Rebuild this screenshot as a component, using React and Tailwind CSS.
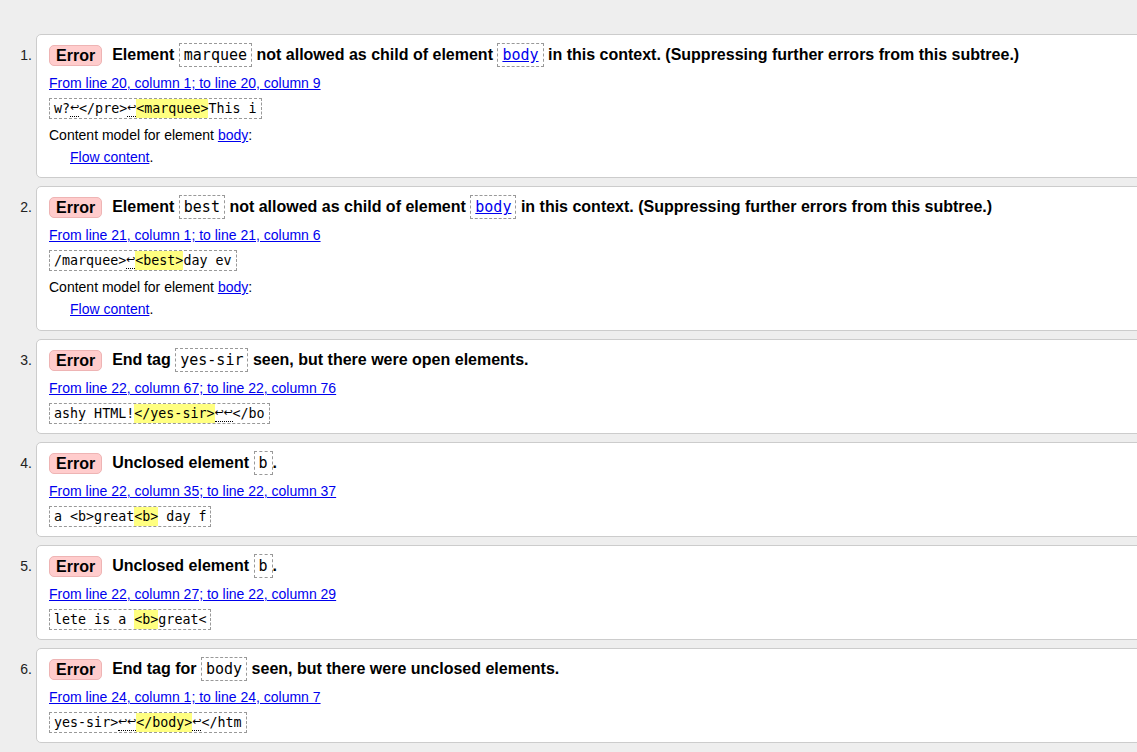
import React from "react";

const mono = { fontFamily: '"DejaVu Sans Mono", "Liberation Mono", monospace' };
const arrowFont = { fontFamily: '"DejaVu Sans", "Liberation Sans", sans-serif' };

function Code({ children, link }) {
  return (
    <span
      className="inline-block border border-dashed border-[#999] px-[4px] py-[2px] leading-[18px] text-[15px] font-normal align-middle"
      style={mono}
    >
      {link ? <a href="#" className="text-[#0000ee] underline">{children}</a> : children}
    </span>
  );
}

function Br({ n = 1 }) {
  return (
    <span className="inline-flex border-b border-dotted border-black h-[16px] items-center">
      {Array.from({ length: n }).map((_, k) => (
        <span key={k} className="inline-flex w-[9px] justify-center text-[11px] leading-[14px]" style={arrowFont}>
          ↩
        </span>
      ))}
    </span>
  );
}

function Hl({ children }) {
  return <span className="bg-[#ffff80]">{children}</span>;
}

const items = [
  {
    title: [
      "Element ",
      <Code key="a">marquee</Code>,
      " not allowed as child of element ",
      <Code key="b" link>body</Code>,
      " in this context. (Suppressing further errors from this subtree.)",
    ],
    link: "From line 20, column 1; to line 20, column 9",
    snippet: ["w?", <Br key="1" />, "</pre>", <Br key="2" />, <Hl key="3">{"<marquee>"}</Hl>, "This i"],
    model: true,
  },
  {
    title: [
      "Element ",
      <Code key="a">best</Code>,
      " not allowed as child of element ",
      <Code key="b" link>body</Code>,
      " in this context. (Suppressing further errors from this subtree.)",
    ],
    link: "From line 21, column 1; to line 21, column 6",
    snippet: ["/marquee>", <Br key="1" />, <Hl key="3">{"<best>"}</Hl>, "day ev"],
    model: true,
  },
  {
    title: ["End tag ", <Code key="a">yes-sir</Code>, " seen, but there were open elements."],
    link: "From line 22, column 67; to line 22, column 76",
    snippet: ["ashy HTML!", <Hl key="3">{"</yes-sir>"}</Hl>, <Br key="1" n={2} />, "</bo"],
  },
  {
    title: ["Unclosed element ", <Code key="a">b</Code>, "."],
    link: "From line 22, column 35; to line 22, column 37",
    snippet: ["a <b>great", <Hl key="3">{"<b>"}</Hl>, " day f"],
  },
  {
    title: ["Unclosed element ", <Code key="a">b</Code>, "."],
    link: "From line 22, column 27; to line 22, column 29",
    snippet: ["lete is a ", <Hl key="3">{"<b>"}</Hl>, "great<"],
  },
  {
    title: ["End tag for ", <Code key="a">body</Code>, " seen, but there were unclosed elements."],
    link: "From line 24, column 1; to line 24, column 7",
    snippet: ["yes-sir>", <Br key="1" n={2} />, <Hl key="3">{"</body>"}</Hl>, <Br key="2" />, "</htm"],
  },
];

export default function App() {
  return (
    <div
      className="min-h-[752px] w-full overflow-hidden bg-[#eeeeee] pt-[34px] text-black"
      style={{ fontFamily: '"Liberation Sans", Arial, sans-serif' }}
    >
      <ol className="flex flex-col gap-[8px] mr-[-20px]">
        {items.map((it, i) => (
          <li key={i} className="flex">
            <div className="w-[36px] shrink-0 h-[26px] mt-[8px] flex items-center justify-end pr-[4px] text-[14px] text-[#222]">
              {i + 1}.
            </div>
            <div className={"flex-1 flex flex-col items-start bg-white border border-[#cccccc] rounded-[5px] px-[12px] pt-[7px] " + (i === 1 ? "pb-[10px]" : "pb-[9px]")}>
              <div className="h-[26px] flex items-center whitespace-nowrap text-[16px] font-bold">
                <span className="inline-block bg-[#ffcccc] border border-[#eeb4b4] rounded-[5px] px-[6px] leading-[19px] mr-[10px]">
                  Error
                </span>
                <span className="whitespace-pre">{it.title}</span>
              </div>
              <div className="mt-[5px] h-[20px] leading-[20px] text-[14px]">
                <a href="#" className="text-[#0000ee] underline">{it.link}</a>
              </div>
              <div
                className="mt-[5px] flex items-center h-[21px] border border-dashed border-[#999] px-[4px] leading-[19px] text-[13.33px] whitespace-pre"
                style={mono}
              >
                {it.snippet.map((s, k) => (typeof s === "string" ? <span key={"s" + k}>{s}</span> : s))}
              </div>
              {it.model && (
                <div className="mt-[5px] text-[14px]">
                  <div className="h-[22px] leading-[22px]">
                    Content model for element <a href="#" className="text-[#0000ee] underline">body</a>:
                  </div>
                  <div className="h-[22px] leading-[22px] pl-[21px]">
                    <a href="#" className="text-[#0000ee] underline">Flow content</a>.
                  </div>
                </div>
              )}
            </div>
          </li>
        ))}
      </ol>
    </div>
  );
}
